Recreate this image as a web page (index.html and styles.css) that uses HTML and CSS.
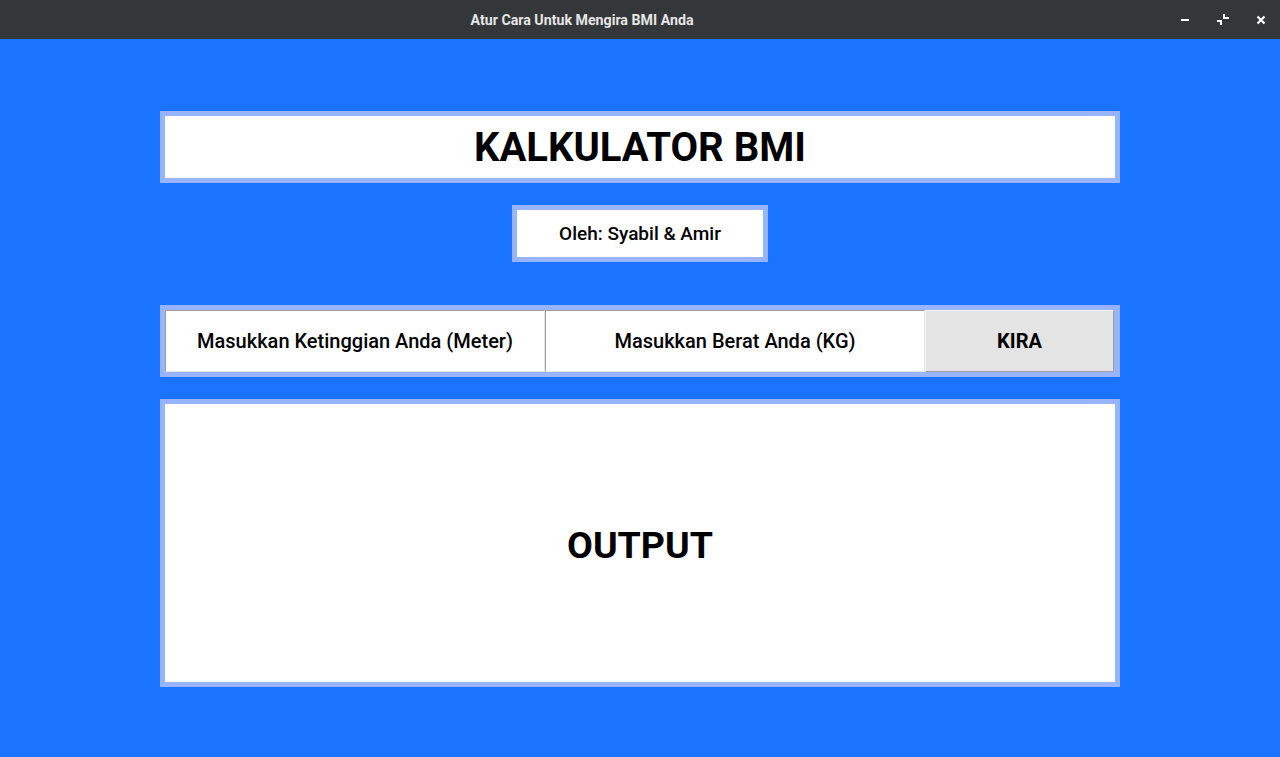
FILE: index.html
```html
<!DOCTYPE html>
<html>
<head>
<meta charset="utf-8">
<link rel="stylesheet" href="styles.css">
</head>
<body>
<div class="titlebar">
  <div class="title">Atur Cara Untuk Mengira BMI Anda</div>
  <svg class="controls" width="95" height="20" viewBox="0 0 95 20">
    <rect x="6" y="9" width="8" height="2" fill="#fff"/>
    <path d="M48 4h2v3h4v2h-6z M42 10h5v5h-2v-3h-3z" fill="#fff"/>
    <path d="M82.5 6.5l7 7M89.5 6.5l-7 7" stroke="#fff" stroke-width="2.2"/>
  </svg>
</div>
<main class="app">
  <div class="frame heading"><h1>KALKULATOR BMI</h1></div>
  <div class="frame byline">Oleh: Syabil &amp; Amir</div>
  <div class="frame inputs">
    <div class="entry first">Masukkan Ketinggian Anda (Meter)</div>
    <div class="entry">Masukkan Berat Anda (KG)</div>
    <div class="button">KIRA</div>
  </div>
  <div class="frame output">OUTPUT</div>
</main>
</body>
</html>
```
FILE: styles.css
```css
html, body {
  margin: 0;
  padding: 0;
}
body {
  width: 1280px;
  height: 757px;
  overflow: hidden;
  background: #1a74ff;
  font-family: Roboto, "Liberation Sans", sans-serif;
  color: #000;
}
.titlebar {
  height: 39px;
  background: #33373a;
  display: flex;
  align-items: center;
  justify-content: center;
  position: relative;
}
.title {
  color: #e6e6e6;
  font-size: 14.2px;
  font-weight: 700;
  margin-right: 116px;
}
.controls {
  position: absolute;
  left: 1175px;
  top: 10px;
  display: block;
}
.app {
  display: flex;
  flex-direction: column;
  align-items: center;
  padding-top: 72px;
}
.frame {
  box-sizing: border-box;
  border: 5px solid #98b4ff;
  background: #fff;
}
.heading {
  width: 960px;
  height: 72px;
  display: flex;
  align-items: center;
  justify-content: center;
}
.heading h1 {
  margin: 0;
  font-size: 40px;
  font-weight: 700;
  padding-top: 1px;
}
.byline {
  margin-top: 22px;
  width: 256px;
  height: 57px;
  display: flex;
  align-items: center;
  justify-content: center;
  font-size: 19px;
  font-weight: 500;
}
.inputs {
  margin-top: 43px;
  width: 960px;
  height: 72px;
  display: flex;
  background: #98b4ff;
}
.entry {
  box-sizing: border-box;
  width: 380px;
  height: 62px;
  background: #fff;
  border-left: 1px solid #a0a0a0;
  border-top: 1px solid #a0a0a0;
  border-right: 1px solid #e6e6e6;
  border-bottom: 1px solid #e6e6e6;
  display: flex;
  align-items: center;
  justify-content: center;
  font-size: 20px;
  font-weight: 500;
}
.button {
  box-sizing: border-box;
  width: 189px;
  height: 62px;
  background: #e4e4e4;
  border-left: 1px solid #f8f8f8;
  border-top: 1px solid #f8f8f8;
  border-right: 1px solid #a0a0a0;
  border-bottom: 1px solid #a0a0a0;
  display: flex;
  align-items: center;
  justify-content: center;
  font-size: 20px;
  font-weight: 700;
}
.output {
  margin-top: 22px;
  width: 960px;
  height: 288px;
  display: flex;
  align-items: center;
  justify-content: center;
  font-size: 37.5px;
  font-weight: 700;
  padding-top: 3px;
}
```
